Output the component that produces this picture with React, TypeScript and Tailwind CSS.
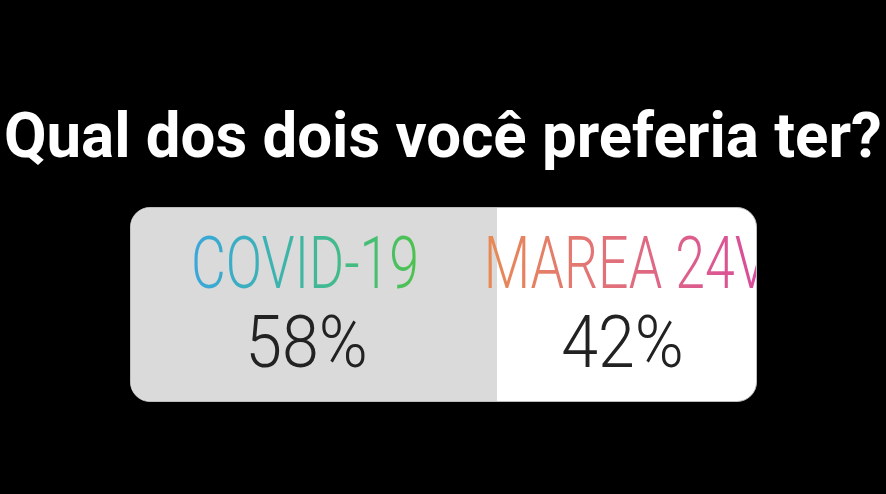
export default function App() {
  return (
    <div className="w-[886px] h-[494px] bg-black overflow-hidden flex flex-col items-center">
      <h1 className="mt-[104px] text-white font-bold text-[63px] leading-[64px] whitespace-nowrap scale-x-[0.98] font-['Roboto',sans-serif]">
        Qual dos dois você preferia ter?
      </h1>

      <div className="mt-[39px] ml-[1px] w-[627px] h-[195px] rounded-[20px] overflow-hidden flex border border-[#bdbdbd] bg-white font-['Roboto',sans-serif] font-light">
        <div className="w-[366px] shrink-0 min-w-0 bg-[#dadada] flex flex-col items-center">
          <span className="mt-[26px] text-[72px] leading-[60px] whitespace-nowrap bg-gradient-to-r from-[#3ba6dc] to-[#4ec24a] bg-clip-text text-transparent scale-x-[0.745] -translate-x-[9px]">
            COVID-19
          </span>
          <span className="mt-[19px] text-[72px] leading-[60px] text-[#222] scale-x-[0.92] -translate-x-[7px]">
            58%
          </span>
        </div>
        <div className="flex-1 min-w-0 flex flex-col items-center">
          <span className="mt-[26px] text-[72px] leading-[60px] whitespace-nowrap bg-gradient-to-r from-[#e88a52] to-[#d8489c] bg-clip-text text-transparent scale-x-[0.745] -translate-x-[1px]">
            MAREA 24V
          </span>
          <span className="mt-[19px] text-[72px] leading-[60px] text-[#222] scale-x-[0.92] -translate-x-[4px]">
            42%
          </span>
        </div>
      </div>
    </div>
  );
}
